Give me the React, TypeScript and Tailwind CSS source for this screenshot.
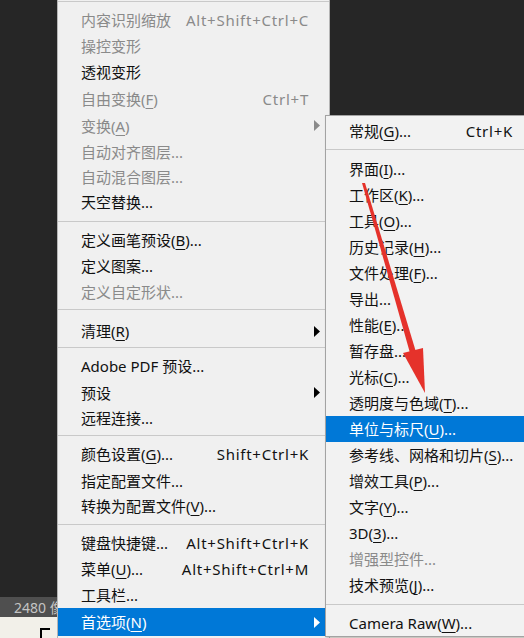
import React from "react";

type Item =
  | { sep: true; h: string; line: string }
  | {
      sep?: false;
      label: React.ReactNode;
      sc?: string;
      dis?: boolean;
      arrow?: boolean;
      hi?: boolean;
      h: string;
    };

const U = ({ c }: { c: string }) => (
  <span className="underline decoration-1 underline-offset-[3px]">{c}</span>
);

const mainItems: Item[] = [
  { label: "内容识别缩放", sc: "Alt+Shift+Ctrl+C", dis: true, h: "h-[26px]" },
  { label: "操控变形", dis: true, h: "h-[25px]" },
  { label: "透视变形", h: "h-[27px]" },
  { label: <>自由变换(<U c="F" />)</>, sc: "Ctrl+T", dis: true, h: "h-[27px]" },
  { label: <>变换(<U c="A" />)</>, dis: true, arrow: true, h: "h-[27px]" },
  { label: "自动对齐图层...", dis: true, h: "h-[25px]" },
  { label: "自动混合图层...", dis: true, h: "h-[25px]" },
  { label: "天空替换...", h: "h-[26px]" },
  { sep: true, h: "h-[12px]", line: "mt-[6px]" },
  { label: <>定义画笔预设(<U c="B" />)...</>, h: "h-[26px]" },
  { label: "定义图案...", h: "h-[26px]" },
  { label: "定义自定形状...", dis: true, h: "h-[25px]" },
  { sep: true, h: "h-[14px]", line: "mt-[5px]" },
  { label: <>清理(<U c="R" />)</>, arrow: true, h: "h-[26px]" },
  { sep: true, h: "h-[8px]", line: "mt-[3px]" },
  { label: "Adobe PDF 预设...", h: "h-[27px]" },
  { label: "预设", arrow: true, h: "h-[27px]" },
  { label: "远程连接...", h: "h-[24px]" },
  { sep: true, h: "h-[11px]", line: "mt-[5px]" },
  { label: <>颜色设置(<U c="G" />)...</>, sc: "Shift+Ctrl+K", h: "h-[26px]" },
  { label: "指定配置文件...", h: "h-[27px]" },
  { label: <>转换为配置文件(<U c="V" />)...</>, h: "h-[24px]" },
  { sep: true, h: "h-[12px]", line: "mt-[6px]" },
  { label: "键盘快捷键...", sc: "Alt+Shift+Ctrl+K", h: "h-[26px]" },
  { label: <>菜单(<U c="U" />)...</>, sc: "Alt+Shift+Ctrl+M", h: "h-[26px]" },
  { label: "工具栏...", h: "h-[26px]" },
  { label: <>首选项(<U c="N" />)</>, arrow: true, hi: true, h: "h-[28px]" },
];

const subItems: Item[] = [
  { label: <>常规(<U c="G" />)...</>, sc: "Ctrl+K", h: "h-[26px]" },
  { sep: true, h: "h-[12px]", line: "mt-[5px]" },
  { label: <>界面(<U c="I" />)...</>, h: "h-[26px]" },
  { label: <>工作区(<U c="K" />)...</>, h: "h-[26px]" },
  { label: <>工具(<U c="O" />)...</>, h: "h-[26px]" },
  { label: <>历史记录(<U c="H" />)...</>, h: "h-[26px]" },
  { label: <>文件处理(<U c="F" />)...</>, h: "h-[26px]" },
  { label: "导出...", h: "h-[26px]" },
  { label: <>性能(<U c="E" />)...</>, h: "h-[26px]" },
  { label: "暂存盘...", h: "h-[26px]" },
  { label: <>光标(<U c="C" />)...</>, h: "h-[26px]" },
  { label: <>透明度与色域(<U c="T" />)...</>, h: "h-[26px]" },
  { label: <>单位与标尺(<U c="U" />)...</>, hi: true, h: "h-[26px]" },
  { label: <>参考线、网格和切片(<U c="S" />)...</>, h: "h-[26px]" },
  { label: <>增效工具(<U c="P" />)...</>, h: "h-[26px]" },
  { label: <>文字(<U c="Y" />)...</>, h: "h-[26px]" },
  { label: <>3D(<U c="3" />)...</>, h: "h-[26px]" },
  { label: "增强型控件...", dis: true, h: "h-[26px]" },
  { label: <>技术预览(<U c="J" />)...</>, h: "h-[26px]" },
  { sep: true, h: "h-[12px]", line: "mt-[6px]" },
  { label: <>Camera Raw(<U c="W" />)...</>, h: "h-[26px]" },
];

const Arrow = ({ color }: { color: string }) => (
  <svg width="6" height="11" viewBox="0 0 6 11" className="shrink-0">
    <path d="M0 0 L6 5.5 L0 11 Z" fill={color} />
  </svg>
);

function Row({ it, padR }: { it: Item; padR: string }) {
  if (it.sep) {
    return (
      <div className={`${it.h} shrink-0`}>
        <div className={`${it.line} h-px bg-[#c9c9c9]`} />
      </div>
    );
  }
  const color = it.hi ? "text-white" : it.dis ? "text-[#8a8a8a]" : "text-[#111111]";
  return (
    <div
      className={`${it.h} shrink-0 flex items-center pl-[23px] ${padR} ${
        it.hi ? "bg-[#0078d7]" : ""
      } ${color}`}
    >
      <span className="flex-1 whitespace-nowrap leading-[18px]">{it.label}</span>
      {it.sc && (
        <span className="whitespace-nowrap leading-[18px] tracking-[0.75px] -mr-[1px]">
          {it.sc}
        </span>
      )}
      {it.arrow && (
        <span className="ml-auto pr-[9px] flex items-center">
          <Arrow color={it.hi ? "#ffffff" : it.dis ? "#8a8a8a" : "#000000"} />
        </span>
      )}
    </div>
  );
}

export default function App() {
  const font = {
    fontFamily: '"Noto Sans", "Noto Sans CJK SC", sans-serif',
  };
  return (
    <div
      className="relative w-[524px] h-[638px] overflow-hidden bg-[#262626] flex flex-col text-[15px]"
      style={font}
    >
      {/* workspace background */}
      <div className="flex-1" />
      <div className="h-[20px] bg-[#4f4f4f] flex items-center pl-[14px] text-[14px] text-[#c4c4c4] shrink-0">
        2480 像素
      </div>
      <div className="h-[21px] bg-[#f2f0e9] shrink-0 relative">
        <div className="absolute left-[40px] top-[11px] w-[10px] h-[10px] border-t-2 border-l-2 border-black" />
      </div>

      {/* main menu */}
      <div className="absolute left-[57px] top-0 w-[273px] h-[638px] bg-[#f0f0f0] border-l border-r border-[#b5b5b5] flex flex-col">
        <div className="mt-[1px] h-px bg-[#c9c9c9] shrink-0" />
        <div className="h-[5px] shrink-0" />
        {mainItems.map((it, i) => (
          <Row key={i} it={it} padR={it.sep ? "" : it.arrow ? "pr-0" : "pr-[21px]"} />
        ))}
      </div>

      {/* submenu */}
      <div className="absolute left-[325px] top-[115px] w-[212px] h-[522px] bg-[#f2f2f2] border border-[#a3a3a3] flex flex-col pt-[2px] shadow-[1px_1px_2px_rgba(0,0,0,0.25)]">
        {subItems.map((it, i) => (
          <Row key={i} it={it} padR="pr-[24px]" />
        ))}
      </div>

      {/* red annotation arrow */}
      <svg className="absolute left-0 top-0 pointer-events-none" width="524" height="638">
        <polygon points="362,183 365,183 416,352 410,353" fill="#e5322b" />
        <polygon points="425,393 403,353 423,348" fill="#e5322b" />
      </svg>
    </div>
  );
}
